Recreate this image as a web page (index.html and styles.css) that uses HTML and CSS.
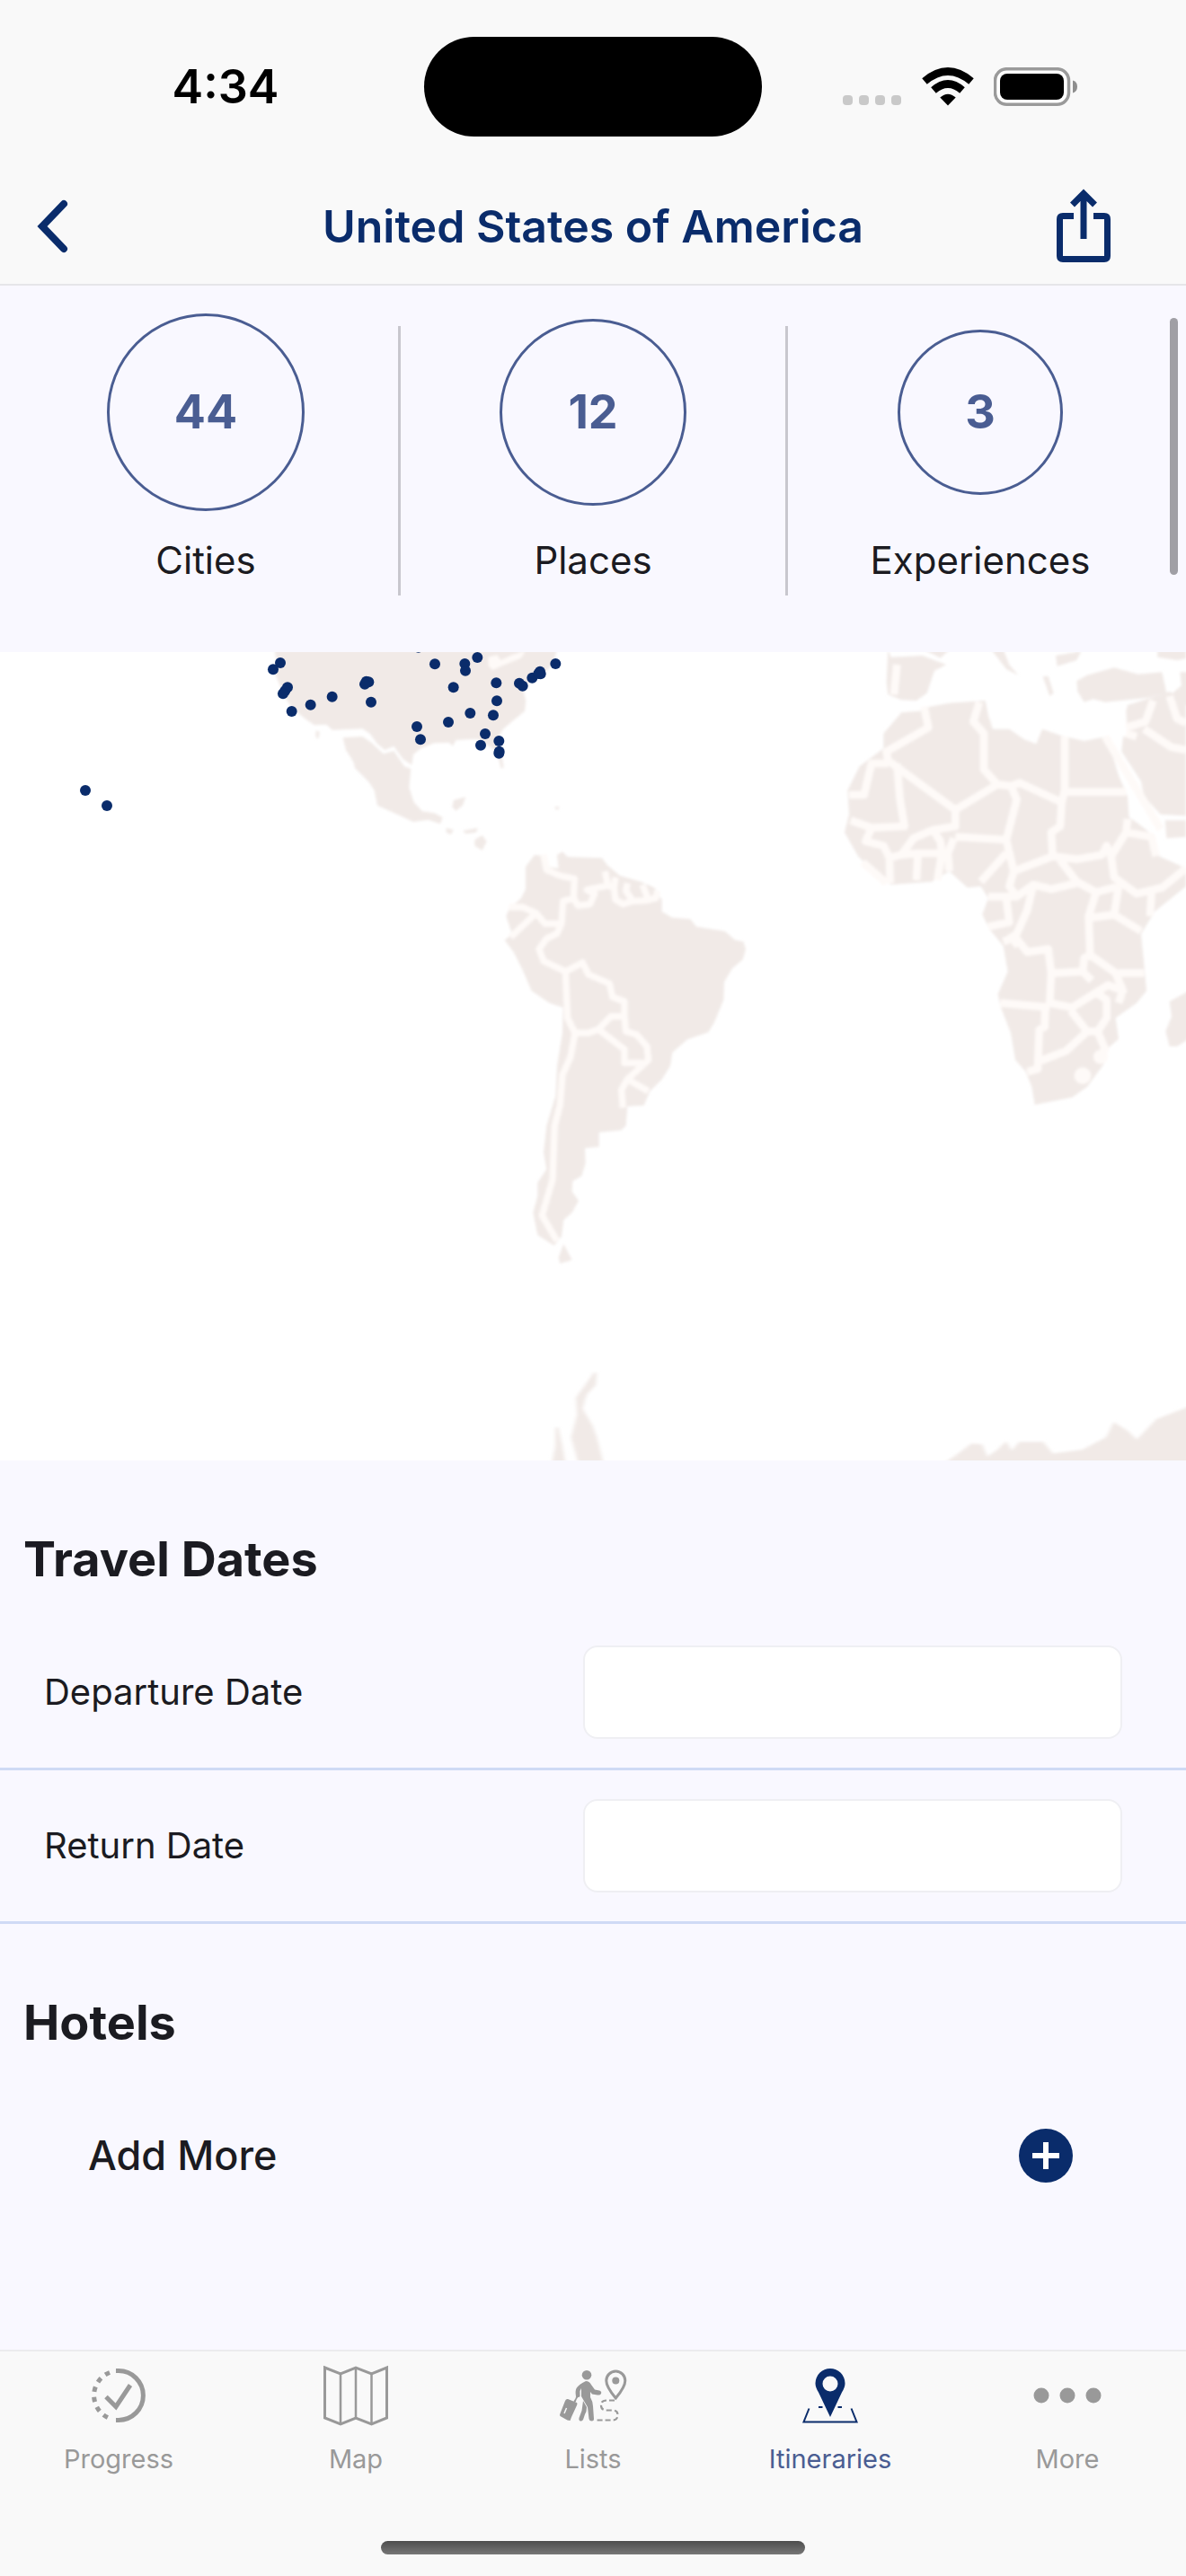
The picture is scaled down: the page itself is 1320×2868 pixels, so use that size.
FILE: index.html
```html
<!DOCTYPE html>
<html lang="en">
<head>
<meta charset="utf-8">
<meta name="viewport" content="width=device-width, initial-scale=1">
<title>United States of America</title>
<link rel="stylesheet" href="styles.css">
</head>
<body>
<header class="header">
  <div class="status">
    <div class="status-time">4:34</div>
    <div class="island"></div>
    <div class="status-icons">
      <svg width="66" height="44" viewBox="0 0 66 44" fill="#c9c9c9" aria-hidden="true">
        <rect x="0" y="31" width="11" height="11" rx="4"/><rect x="18" y="31" width="11" height="11" rx="4"/><rect x="36" y="31" width="11" height="11" rx="4"/><rect x="54" y="31" width="11" height="11" rx="4"/>
      </svg>
      <svg width="58" height="44" viewBox="0 0 58 44" aria-hidden="true">
        <path d="M29 42.500 L20.300 33.600 Q29 26 37.700 33.600 Z"/>
        <path d="M13 25.500 Q29 11.500 45 25.500" fill="none" stroke="#000" stroke-width="8.500"/>
        <path d="M3 15.500 Q29 -6.500 55 15.500" fill="none" stroke="#000" stroke-width="8.500"/>
      </svg>
      <svg width="94" height="44" viewBox="0 0 94 44" aria-hidden="true">
        <rect x="1.500" y="1.700" width="82" height="39.500" rx="13" fill="#fff" stroke="#9a9a9a" stroke-width="3.500"/>
        <rect x="7" y="7" width="71" height="29" rx="8"/>
        <path d="M88 14.500 Q93 16 93 21.500 Q93 27 88 28.500 Z" fill="#8e8e8e"/>
      </svg>
    </div>
  </div>
  <nav class="nav" aria-label="Page">
    <button class="nav-button nav-back" aria-label="Back">
      <svg width="36" height="60" viewBox="0 0 36 60"><path d="M31 5 L7 30 L31 55" fill="none" stroke="currentColor" stroke-width="8" stroke-linecap="round"/></svg>
    </button>
    <h1 class="nav-title">United States of America</h1>
    <button class="nav-button nav-share" aria-label="Share">
      <svg width="60" height="84" viewBox="0 0 60 84" fill="none" stroke="currentColor" stroke-width="7">
        <path d="M19 30.500 H7 Q3.500 30.500 3.500 34 V75 Q3.500 78.500 7 78.500 H53 Q56.500 78.500 56.500 75 V34 Q56.500 30.500 53 30.500 H41"/>
        <path d="M30 56 V6 M17.500 18 L30 5.500 L42.500 18"/>
      </svg>
    </button>
  </nav>
</header>

<main class="main">
  <div class="stats">
    <div class="stat"><div class="stat-ring"><span class="stat-circle stat-large">44</span></div><span class="stat-label">Cities</span></div>
    <div class="divider"></div>
    <div class="stat"><div class="stat-ring"><span class="stat-circle stat-medium">12</span></div><span class="stat-label">Places</span></div>
    <div class="divider"></div>
    <div class="stat"><div class="stat-ring"><span class="stat-circle stat-small">3</span></div><span class="stat-label">Experiences</span></div>
  </div>

  <svg class="map" viewBox="0 0 1320 900" role="img" aria-label="Map of visited cities">
    <defs><filter id="soft" x="-5%" y="-5%" width="110%" height="110%"><feGaussianBlur stdDeviation="4"/></filter></defs>
    <!-- North and Central America -->
    <g transform="translate(270 -6) scale(.33333)">
      <g class="land" filter="url(#soft)">
        <path d="M106 10 L116 60 L104 80 L125 130 L135 160 L165 205 L215 245 L240 262 L280 260 L300 278 L400 274 L425 290 L450 325 L475 345 L505 332 L535 375 L565 395 L570 360 L595 340 L640 322 L690 320 L702 332 L712 312 L750 310 L785 308 L820 330 L850 350 L862 405 L872 405 L862 340 L855 300 L870 275 L905 245 L942 215 L946 180 L938 150 L955 120 L1000 95 L1035 60 L1050 10 Z"/>
        <path d="M335 304 L400 300 L430 320 L470 358 L505 348 L540 400 L562 408 L556 470 L572 520 L600 550 L640 556 L668 570 L660 592 L620 578 L570 585 L520 562 L450 530 L440 480 L420 450 L375 405 L370 385 L345 345 Z"/>
        <path d="M705 512 L745 502 L735 530 L712 548 L700 535 Z M680 605 L705 612 L695 628 L680 620 Z M735 615 L785 605 L780 620 L745 625 Z M775 645 L800 630 L815 650 L800 680 L775 665 Z M245 280 L258 285 L252 310 L244 300 Z M1040 535 h20 l-10 12 Z"/>
      </g>
      <path d="M820 35 L850 28 L862 45 L900 28 L945 12 L930 38 L870 62 L835 78 L822 65 Z" class="border-fill" filter="url(#soft)"/>
    </g>
    <!-- South America -->
    <g transform="translate(540 194) scale(.33333)">
      <g filter="url(#soft)">
        <path class="land" d="M165 95 L188 98 L205 135 L245 140 L240 95 L258 85 L275 102 L390 106 L408 130 L450 165 L520 185 L565 205 L590 245 L590 285 L625 305 L685 310 L705 335 L800 350 L835 380 L862 385 L870 410 L860 445 L825 475 L798 520 L796 580 L765 655 L745 688 L675 712 L625 755 L618 800 L590 845 L550 885 L530 932 L475 935 L470 1000 L455 1015 L380 1022 L380 1070 L333 1075 L335 1125 L322 1168 L292 1185 L290 1220 L312 1250 L290 1290 L262 1315 L255 1370 L230 1400 L175 1365 L160 1290 L175 1235 L175 1190 L205 1145 L195 1090 L205 1000 L235 900 L240 800 L258 690 L260 605 L215 590 L155 550 L125 480 L95 420 L65 380 L90 360 L70 300 L80 275 L120 240 L135 210 L135 135 Z M245 1440 L262 1395 L290 1448 L250 1460 Z"/>
        <path class="border" d="M195 95 L205 145 L250 165 L298 175 L295 240 L260 250 L255 325 L200 325 L170 290 L125 270 L80 270 M170 290 L85 370 M255 325 L240 358 L205 375 L180 410 L195 450 L268 485 L325 455 L345 495 L415 525 L425 570 L465 585 L465 635 L420 635 L378 678 L345 690 L300 690 L275 640 L268 485 M465 635 L470 685 L505 695 L540 735 L545 780 L475 845 L545 885 M378 678 L465 745 L465 790 L525 790 M475 845 L455 880 L460 940 M300 690 L285 770 L258 830 L250 930 L232 1000 L225 1180 L190 1300 L240 1385 M295 240 L310 265 L350 260 L365 225 L340 212 L410 198 L400 150 M410 198 L430 205 L435 245 L460 260 L490 250 L535 248 L570 240 L575 215 M430 205 L435 170 M475 190 L470 215 L490 245 M525 195 L545 245"/>
      </g>
    </g>
    <!-- Africa, southern Europe and the Middle East -->
    <g transform="translate(920 -6) scale(.33333)">
      <g filter="url(#soft)">
        <path class="land" d="M205 10 L215 35 L320 30 L400 60 L360 80 L335 155 L300 180 L250 178 L205 160 L200 120 Z M325 10 H410 L380 38 Z M550 10 H590 L610 60 L640 95 L600 75 Z M765 30 L850 15 L835 45 L770 65 Z M722 100 L740 98 L758 155 L745 165 Z M835 115 L870 95 L960 70 L1040 92 L1120 85 L1135 155 L1075 170 L930 185 L890 175 L860 185 L838 150 Z M1105 10 H1200 V40 L1170 45 L1105 35 Z M1180 85 H1210 V200 L1150 160 L1185 130 Z"/>
        <path class="land" d="M250 220 L310 215 L345 200 L410 188 L530 180 L540 230 L555 275 L610 275 L660 310 L700 325 L720 275 L785 298 L860 315 L935 300 L975 430 L1005 500 L1010 570 L1040 590 L1090 630 L1110 700 L1200 740 L1200 800 L1095 885 L1050 960 L1060 1060 L1068 1150 L1035 1190 L965 1240 L975 1310 L940 1340 L925 1395 L870 1470 L820 1505 L695 1530 L685 1470 L665 1420 L630 1380 L615 1290 L580 1200 L572 1160 L605 1085 L590 1000 L545 945 L520 895 L540 840 L515 800 L470 805 L410 750 L350 785 L215 795 L150 745 L105 700 L60 620 L75 560 L70 480 L110 400 L190 340 L190 290 Z"/>
        <path class="land" d="M1005 195 L1080 172 L1145 150 L1200 180 V565 L1115 560 L1060 500 L1050 450 L985 350 L990 300 L1005 300 L1000 215 Z M1130 580 H1200 V635 L1135 640 Z M1145 1185 L1210 1150 V1310 L1170 1335 L1145 1335 L1132 1285 L1152 1235 Z"/>
        <path class="border border-wide" d="M235 60 L225 160 M325 200 L340 270 L200 350 L205 380 L430 545 L570 460 L525 410 L525 290 L490 250 L510 185 M75 495 H125 L150 390 H205 M235 390 L245 510 L260 600 L150 605 L80 580 M430 545 L430 600 L355 612 L290 640 L250 695 L210 705 L190 665 L130 650 L150 605 M355 612 L380 650 L385 690 L305 690 L250 695 M305 690 L300 780 M210 705 L212 790 M385 690 L370 780 M425 640 L405 690 L410 750 M430 635 L600 645 L635 510 L615 465 L570 460 M615 465 L645 455 L785 520 L795 480 L795 300 M795 485 H1000 M785 520 L780 600 L750 620 L755 700 L625 750 L600 645 M600 690 L515 785 M755 700 L835 710 L920 695 L935 665 L950 700 L1000 620 L1005 575 M1000 620 L1085 635 L1100 700 M950 700 L960 770 L1035 825 L1120 805 L1200 740 M770 700 L835 785 L900 820 L975 800 M625 750 L610 800 L635 835 H540 M635 835 L690 795 L750 810 L835 790 M690 795 L670 880 L630 970 L590 985 M540 935 L610 920 L600 840 M630 970 L670 1020 L740 1010 L750 1090 L745 1190 L820 1205 L900 1155 L940 1130 L990 1150 L965 1090 L880 1030 L875 900 L900 820 M885 905 L960 895 L975 800 M960 895 L1050 950 M1085 820 L1080 900 M975 1090 H1060 M880 1030 L860 1040 L855 1085 L760 1090 M855 1085 L885 1115 M580 1190 L745 1205 M730 1205 L728 1270 L710 1280 L705 1410 L670 1420 M710 1385 L800 1350 L870 1285 L815 1215 M870 1285 L905 1285 L935 1240 L935 1180 L900 1155 M905 1285 L930 1345 L905 1375 M985 1160 L975 1190 M1000 270 L1065 250 L1090 180 M1060 275 L1150 335 L1200 345 M1145 165 L1170 240 L1200 255 M1000 290 L1035 300"/>
        <path class="border border-wide" d="M930 300 L1115 610 M120 720 L200 790 M640 1000 L610 960"/>
        <circle class="border-fill" cx="855" cy="1433" r="28"/>
        <circle class="border-fill" cx="915" cy="1370" r="24"/>
      </g>
    </g>
    <!-- Antarctica -->
    <g class="land" transform="translate(560 774) scale(.48469 .33333)" filter="url(#soft)">
      <path d="M208 85 L215 85 L213 125 L192 158 L182 205 L205 260 L215 300 L230 385 H172 L156 300 L170 225 L167 168 L190 122 Z M120 268 L127 268 L136 330 L143 385 H112 L120 330 Z M1015 385 L1040 360 L1075 322 L1100 324 L1112 365 L1135 342 L1155 314 L1168 345 L1185 316 H1240 L1262 355 L1330 342 L1385 300 L1402 250 L1435 280 L1455 308 L1500 240 L1580 195 V400 H1015 Z"/>
    </g>
    <!-- Visited cities -->
    <g class="pins" transform="translate(270 -6) scale(.33333)">
      <circle cx="-525" cy="480" r="18"/><circle cx="-453" cy="531" r="18"/>
      <circle cx="126" cy="54" r="18"/><circle cx="102" cy="76" r="18"/><circle cx="150" cy="136" r="18"/><circle cx="142" cy="147" r="18"/><circle cx="135" cy="157" r="18"/><circle cx="164" cy="216" r="18"/><circle cx="227" cy="194" r="18"/><circle cx="299" cy="167" r="18"/><circle cx="413" cy="116" r="18"/><circle cx="421" cy="118" r="18"/><circle cx="408" cy="125" r="18"/><circle cx="429" cy="185" r="18"/><circle cx="587" cy="2" r="18"/><circle cx="642" cy="58" r="18"/><circle cx="742" cy="57" r="18"/><circle cx="744" cy="80" r="18"/><circle cx="784" cy="36" r="18"/><circle cx="704" cy="136" r="18"/><circle cx="847" cy="121" r="18"/><circle cx="849" cy="181" r="18"/><circle cx="837" cy="229" r="18"/><circle cx="760" cy="222" r="18"/><circle cx="687" cy="252" r="18"/><circle cx="582" cy="267" r="18"/><circle cx="594" cy="310" r="18"/><circle cx="810" cy="291" r="18"/><circle cx="795" cy="329" r="18"/><circle cx="856" cy="315" r="18"/><circle cx="857" cy="350" r="18"/><circle cx="856" cy="356" r="18"/><circle cx="924" cy="122" r="18"/><circle cx="935" cy="131" r="18"/><circle cx="967" cy="104" r="18"/><circle cx="993" cy="83" r="18"/><circle cx="995" cy="91" r="18"/><circle cx="988" cy="90" r="18"/><circle cx="1045" cy="57" r="18"/>
    </g>
  </svg>

  <section>
    <h2 class="section-title">Travel Dates</h2>
    <div class="field"><label for="departure">Departure Date</label><input id="departure" class="field-input" type="text"></div>
    <div class="field"><label for="return">Return Date</label><input id="return" class="field-input" type="text"></div>
  </section>
  <section>
    <h2 class="section-title">Hotels</h2>
    <div class="add-row">
      <span id="add-hotel">Add More</span>
      <button class="add-button" aria-labelledby="add-hotel">
        <svg width="60" height="60" viewBox="0 0 60 60"><circle cx="30" cy="30" r="30" fill="currentColor"/><path d="M30 15 V45 M15 30 H45" stroke="#fff" stroke-width="6"/></svg>
      </button>
    </div>
  </section>
  <div class="scrollbar"></div>
</main>

<footer class="tabbar">
  <nav class="tabs" aria-label="Sections">
    <a class="tab" href="#progress">
      <svg width="72" height="72" viewBox="0 0 72 72" fill="none" stroke="currentColor" stroke-width="5">
        <path d="M33 8.600 H36 A27.400 27.400 0 0 1 36 63.400 H33"/>
        <path d="M26.500 10.300 A27.400 27.400 0 0 0 26.500 61.700" stroke-dasharray="5.500 6" stroke-dashoffset="-.5"/>
        <path d="M22 37.500 L33 48.500 L49 24.500"/>
      </svg>
      <span>Progress</span>
    </a>
    <a class="tab" href="#map">
      <svg width="76" height="72" viewBox="0 0 76 72" fill="none" stroke="currentColor" stroke-width="3">
        <path d="M3.500 5 L21 12 L38 5 L55.500 12 L72.500 5 V61 L55.500 68 L38 61 L21 68 L3.500 61 Z"/>
        <path d="M21 12 V68 M38 5 V61 M55.500 12 V68" stroke-width="2.500"/>
      </svg>
      <span>Map</span>
    </a>
    <a class="tab" href="#lists">
      <svg width="76" height="72" viewBox="0 0 76 72" fill="currentColor">
        <circle cx="31" cy="13.300" r="5.300"/>
        <path d="M30 20 Q34 20 36 24 L40 29.500 L45 30.500 Q48 31.500 47 34 Q46 36 43 35.500 L37 34.500 L35 32 L35 38 Q38 43 38 48 L39 62 Q39 64.500 36.500 64.500 Q34 64.500 33.500 62 L32 49 L25 37 V28 L23.500 31 V37 Q22 39 19 37 Q18 31 19.500 28 Q23 23 30 20 Z"/>
        <path d="M27 42 L31 49 Q31 54 29 57 L27 63 Q25 65.500 23 64 Q22 63 22.500 61 L25.500 53 Z"/>
        <path d="M21 37 L17 43 M20 37 L18 43" fill="none" stroke="currentColor" stroke-width="1.500"/>
        <path d="M10 40 L20 44 Q21 45 20 47 L14 60 L12.500 64 L9.500 63.500 L1.500 59 Q.5 58 1.500 56 L7 42 Q8 39.500 10 40 Z"/>
        <path d="M8.500 50 L6 56" fill="none" stroke="#f9f9f9" stroke-width="1.500"/>
        <path d="M63.300 39 Q52.800 26.500 52.800 19.500 A10.500 10.500 0 0 1 73.800 19.500 Q73.800 26.500 63.300 39 Z" fill="none" stroke="currentColor" stroke-width="3"/>
        <circle cx="63.300" cy="19.500" r="4"/>
        <path d="M62 41.500 H53 Q47 41.500 47 47 Q47 52.500 53 52.500 H60 Q65.500 52.500 65.500 57.500 Q65.500 63.500 60 63.500 H41" fill="none" stroke="currentColor" stroke-width="2.200" stroke-dasharray="6 3"/>
      </svg>
      <span>Lists</span>
    </a>
    <a class="tab tab-active" href="#itineraries" aria-current="page">
      <svg width="72" height="72" viewBox="0 0 72 72" fill="currentColor">
        <path fill-rule="evenodd" d="M36 60 L23 32.500 Q19.500 27 19.500 22.500 A16.500 16.500 0 0 1 52.500 22.500 Q52.500 27 49 32.500 Z M36 14.500 A8.500 8.500 0 1 0 36 31.500 A8.500 8.500 0 1 0 36 14.500 Z"/>
        <path d="M12.500 50.500 L6.500 65.500 H65.500 L59.500 50.500 M23 49 H27.500 M44.500 49 H49" fill="none" stroke="currentColor" stroke-width="2"/>
      </svg>
      <span>Itineraries</span>
    </a>
    <a class="tab" href="#more">
      <svg width="76" height="72" viewBox="0 0 76 72" fill="currentColor"><circle cx="9" cy="36" r="8.500"/><circle cx="38" cy="36" r="8.500"/><circle cx="67" cy="36" r="8.500"/></svg>
      <span>More</span>
    </a>
  </nav>
  <div class="home-indicator"></div>
</footer>
</body>
</html>
```
FILE: styles.css
```css
:root {
  --navy: #0a2c6b;
  --blue: #4a5d92;
  --ink: #1b1b21;
  --page: #f9f8ff;
  --bar: #f9f9f9;
  --muted: #999;
}

* { box-sizing: border-box; }

body {
  margin: 0;
  min-height: 100vh;
  display: flex;
  flex-direction: column;
  background: var(--page);
  color: var(--ink);
  font-family: Inter, "Liberation Sans", sans-serif;
}

h1, h2 { margin: 0; }
svg { display: block; }
button { border: 0; padding: 0; background: none; color: var(--navy); }

/* Header */
.header {
  padding-top: 41px;
  background: var(--bar);
  border-bottom: 2px solid #e6e6e9;
}
.status {
  display: grid;
  grid-template-columns: 1fr 376px 1fr;
  align-items: center;
}
.status-time {
  padding-left: 30px;
  text-align: center;
  color: #000;
  font-size: 52px;
  line-height: 60px;
  font-weight: 600;
}
.island { height: 111px; border-radius: 56px; background: #000; }
.status-icons {
  display: flex;
  justify-content: center;
  gap: 22px;
  padding-right: 30px;
}
.nav {
  display: grid;
  grid-template-columns: 1fr auto 1fr;
  align-items: center;
  padding: 58px 0 22px;
}
.nav-back { justify-self: start; margin-left: 40px; }
.nav-share { justify-self: end; margin-right: 84px; }
.nav-title {
  color: var(--navy);
  font-size: 50px;
  line-height: 60px;
  font-weight: 600;
}

/* Counters */
.main { position: relative; flex: 1; }
.stats {
  display: grid;
  grid-template-columns: 1fr 3px 1fr 3px 1fr;
  align-items: center;
  padding: 31px 15px 49px;
}
.stat {
  display: flex;
  flex-direction: column;
  align-items: center;
  gap: 25px;
  padding-bottom: 23px;
}
.stat-ring { display: flex; align-items: center; height: 220px; }
.stat-circle {
  display: flex;
  align-items: center;
  justify-content: center;
  border: 3px solid var(--blue);
  border-radius: 50%;
  color: var(--blue);
  font-size: 52px;
  line-height: 60px;
  font-weight: 700;
}
.stat-large { width: 220px; height: 220px; }
.stat-medium { width: 208px; height: 208px; }
.stat-small { width: 184px; height: 184px; }
.stat-label { font-size: 42px; line-height: 60px; }
.divider { height: 300px; background: #c8c7ce; }
.scrollbar {
  position: absolute;
  top: 36px;
  right: 9px;
  width: 9px;
  height: 286px;
  border-radius: 5px;
  background: #a09fa5;
}

/* Map */
.map { width: 100%; height: auto; background: #fff; }
.land { fill: #f1eae7; }
.border {
  fill: none;
  stroke: #fefaf8;
  stroke-width: 22px;
  stroke-linejoin: round;
}
.border-wide { stroke-width: 26px; }
.border-fill { fill: #fefaf8; }
.pins { fill: var(--navy); }

/* Form */
.section-title {
  padding: 78px 26px 32px;
  font-size: 54px;
  line-height: 64px;
  font-weight: 700;
}
.field {
  display: grid;
  grid-template-columns: 1fr 1fr;
  align-items: center;
  padding: 32px 71px 32px 49px;
  border-bottom: 3px solid #cfdaf5;
  font-size: 40px;
  line-height: 48px;
}
.field-input {
  width: 100%;
  height: 104px;
  padding: 0 24px;
  border: 2px solid #efeff3;
  border-radius: 16px;
  background: #fff;
  color: inherit;
  font: inherit;
}
.add-row {
  display: flex;
  align-items: center;
  justify-content: space-between;
  padding: 54px 126px 54px 98px;
  font-size: 45px;
  line-height: 60px;
  font-weight: 500;
}

/* Tab bar */
.tabbar {
  padding: 13px 0 24px;
  border-top: 2px solid #ececee;
  background: var(--bar);
}
.tabs { display: grid; grid-template-columns: repeat(5, 1fr); }
.tab {
  display: flex;
  flex-direction: column;
  align-items: center;
  gap: 17px;
  color: var(--muted);
  font-size: 29px;
  line-height: 36px;
  text-decoration: none;
}
.tab-active { color: var(--navy); }
.tab-active span { color: var(--blue); }
.home-indicator {
  width: 472px;
  height: 15px;
  margin: 73px auto 0;
  border-radius: 8px;
  background: linear-gradient(#4d4d4d, #777);
}
```
